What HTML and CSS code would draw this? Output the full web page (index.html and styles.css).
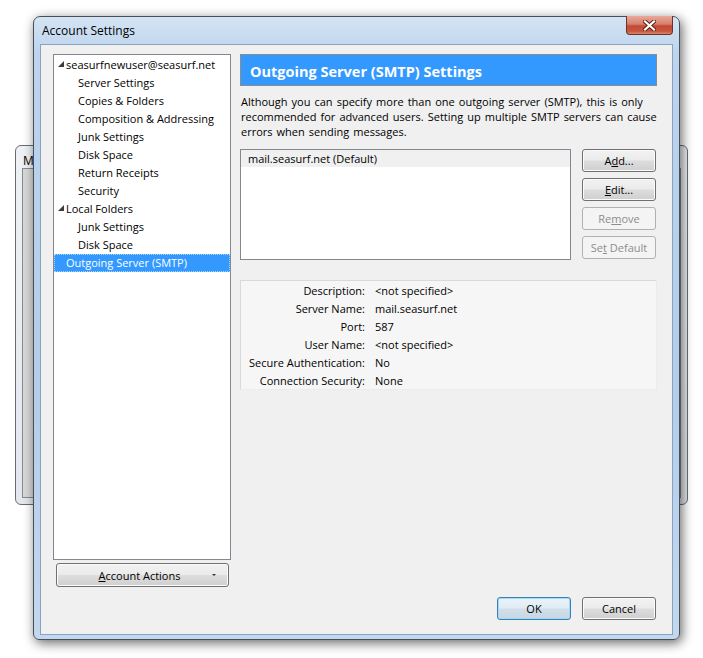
FILE: index.html
```html
<!DOCTYPE html>
<html lang="en">
<head>
    <meta charset="UTF-8">
    <title>Account Settings</title>
    <link rel="stylesheet" href="styles.css">
</head>
<body>
    <div class="desktop">
        <div class="bgwin">
            <span class="bgwin-title">M</span>
            <div class="bgwin-client"></div>
        </div>

        <div class="window">
            <div class="titlebar">
                <span class="title">Account Settings</span>
                <span class="close">
                    <svg width="13" height="11" viewBox="0 0 13 11">
                        <path d="M2 1.5 L11 9.5 M11 1.5 L2 9.5" stroke="#5a1c12" stroke-width="4" stroke-linecap="square"/>
                        <path d="M2 1.5 L11 9.5 M11 1.5 L2 9.5" stroke="#ffffff" stroke-width="2.2" stroke-linecap="square"/>
                    </svg>
                </span>
            </div>

            <div class="client">
                <div class="sidebar">
                    <ul class="tree">
                        <li class="root"><span class="twisty"><svg width="6" height="6" viewBox="0 0 6 6"><polygon points="6,0 6,6 0,6" fill="#3c3c3c"/></svg></span>seasurfnewuser@seasurf.net</li>
                        <li class="child">Server Settings</li>
                        <li class="child">Copies &amp; Folders</li>
                        <li class="child">Composition &amp; Addressing</li>
                        <li class="child">Junk Settings</li>
                        <li class="child">Disk Space</li>
                        <li class="child">Return Receipts</li>
                        <li class="child">Security</li>
                        <li class="root"><span class="twisty"><svg width="6" height="6" viewBox="0 0 6 6"><polygon points="6,0 6,6 0,6" fill="#3c3c3c"/></svg></span>Local Folders</li>
                        <li class="child">Junk Settings</li>
                        <li class="child">Disk Space</li>
                        <li class="root selected">Outgoing Server (SMTP)</li>
                    </ul>
                    <button class="btn menu-btn"><span class="menu-label"><u>A</u>ccount Actions</span><span class="menu-arrow"></span></button>
                </div>

                <div class="pane">
                    <div class="pane-header">Outgoing Server (SMTP) Settings</div>
                    <p class="intro">Although you can specify more than one outgoing server (SMTP), this is only recommended for advanced users. Setting up multiple SMTP servers can cause errors when sending messages.</p>

                    <div class="servers">
                        <div class="server-list">
                            <div class="server-row selected">mail.seasurf.net (Default)</div>
                        </div>
                        <div class="server-buttons">
                            <button class="btn">A<u>d</u>d...</button>
                            <button class="btn"><u>E</u>dit...</button>
                            <button class="btn" disabled>Re<u>m</u>ove</button>
                            <button class="btn" disabled>Se<u>t</u> Default</button>
                        </div>
                    </div>

                    <div class="details">
                        <span class="label">Description:</span><span class="value">&lt;not specified&gt;</span>
                        <span class="label">Server Name:</span><span class="value">mail.seasurf.net</span>
                        <span class="label">Port:</span><span class="value">587</span>
                        <span class="label">User Name:</span><span class="value">&lt;not specified&gt;</span>
                        <span class="label">Secure Authentication:</span><span class="value">No</span>
                        <span class="label">Connection Security:</span><span class="value">None</span>
                    </div>

                    <div class="dialog-buttons">
                        <button class="btn default">OK</button>
                        <button class="btn">Cancel</button>
                    </div>
                </div>
            </div>
        </div>
    </div>
</body>
</html>
```

FILE: styles.css
```css
* {
    margin: 0;
    padding: 0;
    box-sizing: border-box;
}
body {
    background-color: #ffffff;
    font-family: "Open Sans", "Noto Sans", sans-serif;
    font-size: 11px;
    color: #000000;
}
.desktop {
    position: relative;
    width: 703px;
    height: 658px;
    overflow: hidden;
}

/* window behind */
.bgwin {
    position: absolute;
    left: 15px;
    top: 145px;
    width: 673px;
    height: 360px;
    border: 1px solid #6d6d6d;
    border-radius: 6px;
    background: linear-gradient(to bottom, #eef2f6, #e2e8ee);
}
.bgwin-title {
    position: absolute;
    left: 7px;
    top: 6px;
    font-size: 12px;
}
.bgwin-client {
    position: absolute;
    left: 6px;
    top: 22px;
    right: 6px;
    bottom: 6px;
    border: 1px solid #8a8a8a;
    background: linear-gradient(to right, #d8d8d8, #e8e8e8 40%, #d8d8d8);
}

/* main window */
.window {
    position: absolute;
    left: 33px;
    top: 16px;
    width: 647px;
    height: 624px;
    border: 1px solid #4a4f57;
    border-radius: 7px 7px 6px 6px;
    background: linear-gradient(to bottom, #d4e4f4 0%, #bcd4ed 6%, #b3cdea 60%, #c2d8ef 100%);
    box-shadow: 2px 3px 12px rgba(0, 0, 0, 0.6);
    padding: 0 6px 4px;
    display: flex;
    flex-direction: column;
}
.titlebar {
    height: 27px;
    position: relative;
    display: flex;
    align-items: center;
}
.title {
    padding-left: 2px;
    font-size: 12px;
    color: #000000;
}
.close {
    position: absolute;
    right: 0px;
    top: -1px;
    width: 47px;
    height: 19px;
    border: 1px solid #6e3027;
    border-top: none;
    border-radius: 0 0 4px 4px;
    background: linear-gradient(to bottom, #e9a99b 0%, #d7806d 45%, #c34a33 55%, #c9563c 85%, #d98a6f 100%);
    display: flex;
    align-items: center;
    justify-content: center;
}
.client {
    flex: 1;
    border: 1px solid #8ba2bd;
    background-color: #f0f0f0;
    padding: 9px 15px 14px 12px;
    display: flex;
    gap: 9px;
}

/* left side */
.sidebar {
    width: 178px;
    display: flex;
    flex-direction: column;
}
.tree {
    list-style: none;
    height: 506px;
    border: 1px solid #828790;
    background-color: #ffffff;
    padding-top: 1px;
}
.tree li {
    height: 18px;
    line-height: 18px;
    white-space: nowrap;
}
.tree .root {
    padding-left: 12px;
    position: relative;
}
.tree .child {
    padding-left: 24px;
}
.twisty {
    position: absolute;
    left: 4px;
    top: 5px;
    line-height: 0;
}
.tree .selected {
    background-color: #3399ff;
    color: #ffffff;
    outline: 1px dotted #a8d2ff;
    outline-offset: -1px;
}
.btn {
    font-family: inherit;
    font-size: 11px;
    color: #000000;
    width: 74px;
    height: 23px;
    border: 1px solid #707070;
    border-radius: 3px;
    background: linear-gradient(to bottom, #f2f2f2 0%, #ebebeb 48%, #dddddd 52%, #cfcfcf 100%);
    box-shadow: inset 0 0 0 1px #fbfbfb;
}
.btn:disabled {
    color: #8d8d8d;
    border-color: #adb2b5;
    background: #f4f4f4;
    box-shadow: none;
}
.btn.default {
    border-color: #3c7fb1;
    background: linear-gradient(to bottom, #eaf3f9 0%, #e1ebf3 48%, #d2dfea 52%, #c6d6e3 100%);
    box-shadow: inset 0 0 0 1px #9fdcf6;
}
.menu-btn {
    width: auto;
    height: 24px;
    margin: 3px 2px 0 3px;
    display: flex;
    align-items: center;
}
.menu-label {
    flex: 1;
    text-align: center;
    padding-left: 10px;
}
.menu-arrow {
    width: 0;
    height: 0;
    border-left: 2px solid transparent;
    border-right: 2px solid transparent;
    border-top: 2px solid #333333;
    margin-right: 12px;
}

/* right side */
.pane {
    flex: 1;
    display: flex;
    flex-direction: column;
}
.pane-header {
    height: 32px;
    border: 1px solid #8c8c8c;
    background-color: #3399ff;
    color: #ffffff;
    font-weight: bold;
    font-size: 14.5px;
    line-height: 33px;
    padding-left: 9px;
}
.intro {
    margin-top: 8px;
    line-height: 15px;
    padding-left: 1px;
    word-spacing: 1.2px;
}
.servers {
    margin-top: 10px;
    display: flex;
    gap: 11px;
    padding-right: 1px;
}
.server-list {
    flex: 1;
    height: 111px;
    border: 1px solid #828790;
    background-color: #ffffff;
}
.server-row {
    height: 17px;
    line-height: 17px;
    padding-left: 7px;
}
.server-row.selected {
    background-color: #f0f0f0;
}
.server-buttons {
    display: flex;
    flex-direction: column;
    gap: 6px;
}
.details {
    margin-top: 20px;
    height: 110px;
    border: 1px solid #d9d9d9;
    border-right-color: #ececec;
    border-bottom-color: #ececec;
    background-color: #f6f6f6;
    padding-top: 1px;
    display: grid;
    grid-template-columns: 124px 1fr;
    grid-auto-rows: 18px;
    column-gap: 10px;
    line-height: 18px;
}
.label {
    text-align: right;
}
.dialog-buttons {
    margin-top: auto;
    display: flex;
    justify-content: flex-end;
    gap: 11px;
    padding-right: 1px;
}
```
